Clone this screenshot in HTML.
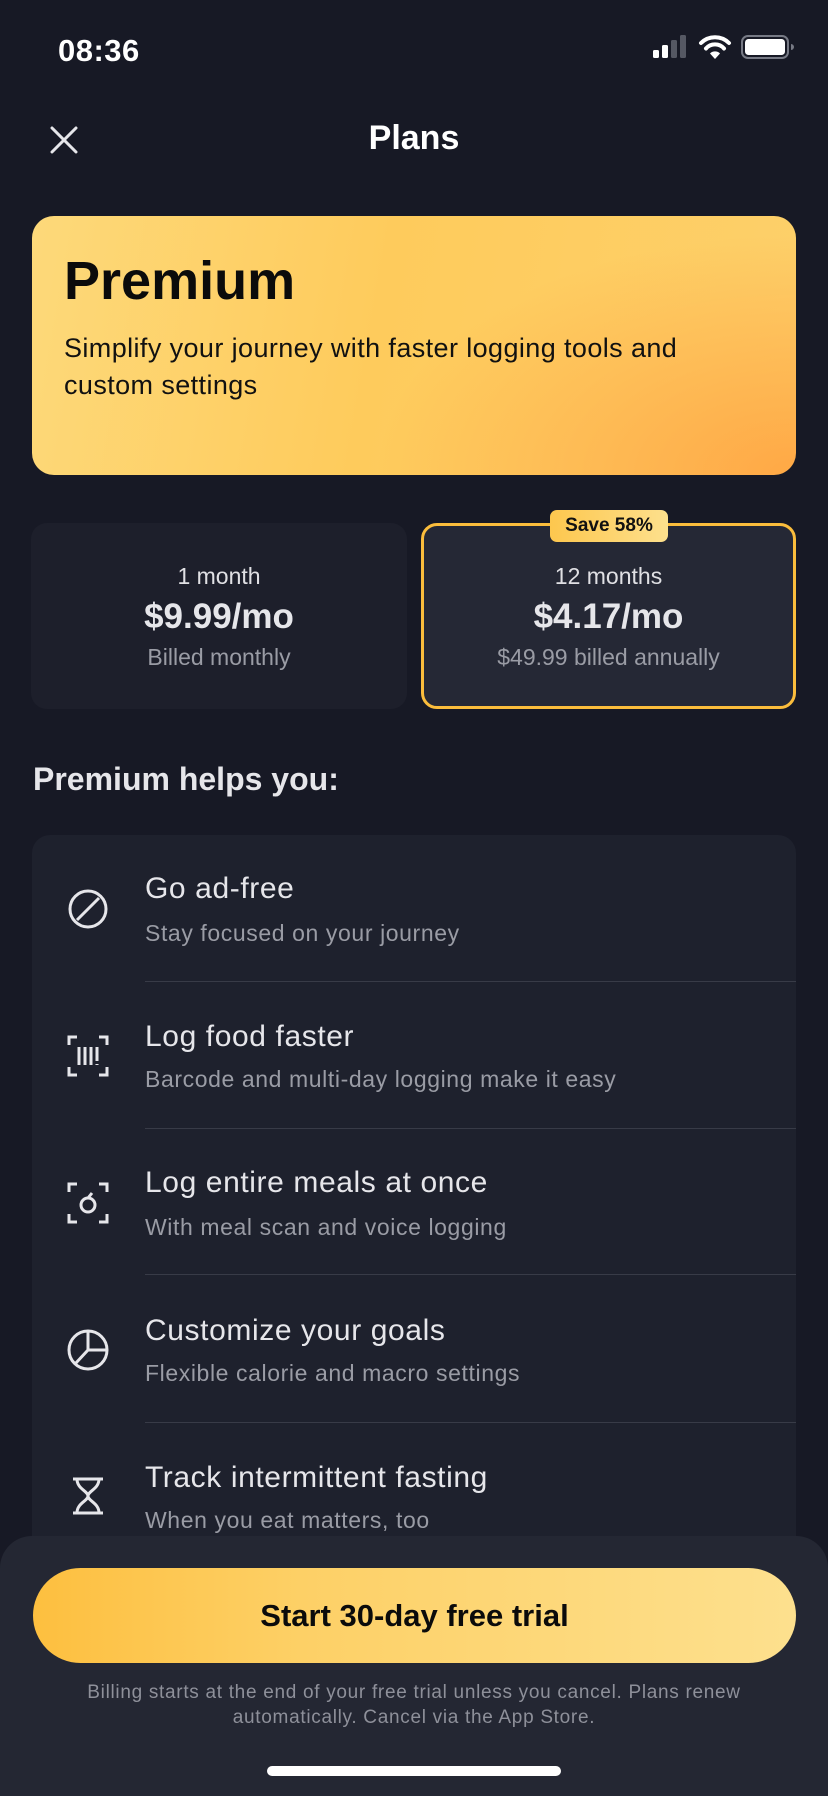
<!DOCTYPE html>
<html><head><meta charset="utf-8"><style>
*{margin:0;padding:0;box-sizing:border-box}
body{width:828px;height:1792px;background:#171925;font-family:"Liberation Sans",sans-serif;color:#fff;position:relative;overflow:hidden}
.abs{position:absolute}
.c{text-align:center}
.t{position:absolute;left:145px;font-size:30px;letter-spacing:0.6px;line-height:34px;color:#e6e6ea}
.s{position:absolute;left:145px;font-size:23px;letter-spacing:0.6px;line-height:26px;color:#9a9ca5}
.d{position:absolute;left:145px;width:651px;height:1px;background:#383b47}
</style></head><body>
<div class="abs" style="left:58px;top:33px;font-size:31px;font-weight:bold;letter-spacing:0.5px">08:36</div>
<svg class="abs" style="left:650px;top:34px" width="150" height="32" viewBox="0 0 150 32">
<rect x="3" y="16" width="6" height="8" rx="1.5" fill="#fff"/>
<rect x="12" y="11" width="6" height="13" rx="1.5" fill="#fff"/>
<rect x="21" y="6" width="6" height="18" rx="1.5" fill="#555863"/>
<rect x="30" y="1" width="6" height="23" rx="1.5" fill="#555863"/>
<path d="M51 9 a20 20 0 0 1 28 0" stroke="#fff" stroke-width="4" fill="none" stroke-linecap="round"/>
<path d="M56 14.5 a12 12 0 0 1 18 0" stroke="#fff" stroke-width="4" fill="none" stroke-linecap="round"/>
<path d="M60 19.5 L65 25 L70 19.5 a7 7 0 0 0 -10 0z" fill="#fff"/>
<rect x="92" y="2" width="46" height="22" rx="6" fill="none" stroke="#777a85" stroke-width="2"/>
<rect x="95" y="5" width="40" height="16" rx="3.5" fill="#fff"/>
<path d="M141 10 v6 a3 3 0 0 0 0-6z" fill="#777a85"/>
</svg>
<svg class="abs" style="left:50px;top:126px" width="28" height="28" viewBox="0 0 28 28"><path d="M2 2L26 26M26 2L2 26" stroke="#e6e6ea" stroke-width="3" stroke-linecap="round"/></svg>
<div class="abs c" style="left:0;width:828px;top:119px;font-size:34px;font-weight:bold">Plans</div>

<div class="abs" style="left:32px;top:216px;width:764px;height:259px;border-radius:22px;background:radial-gradient(ellipse 420px 240px at 100% 100%,#ffa845 0%,rgba(255,190,80,0) 100%),linear-gradient(100deg,#fdd97a 0%,#fecb5c 45%,#fdd06a 100%)"></div>
<div class="abs" style="left:64px;top:250px;font-size:54px;font-weight:bold;color:#0b0b0b">Premium</div>
<div class="abs" style="left:64px;top:330px;width:700px;font-size:27px;letter-spacing:0.4px;line-height:37px;color:#111">Simplify your journey with faster logging tools and<br>custom settings</div>

<div class="abs" style="left:31px;top:523px;width:376px;height:186px;border-radius:16px;background:#1d1f2b"></div>
<div class="abs c" style="left:31px;width:376px;top:563px;font-size:23px;color:#e0e0e4">1 month</div>
<div class="abs c" style="left:31px;width:376px;top:597px;font-size:35px;font-weight:bold;color:#e6e6ea">$9.99/mo</div>
<div class="abs c" style="left:31px;width:376px;top:644px;font-size:23px;color:#9a9ca5">Billed monthly</div>

<div class="abs" style="left:421px;top:523px;width:375px;height:186px;border-radius:16px;background:#252835;border:3px solid #fbbd3c"></div>
<div class="abs c" style="left:550px;top:510px;width:118px;height:32px;border-radius:7px;background:linear-gradient(90deg,#fdc74e,#fde08d);color:#111;font-size:19px;font-weight:bold;line-height:32px">Save 58%</div>
<div class="abs c" style="left:421px;width:375px;top:563px;font-size:23px;color:#e0e0e4">12 months</div>
<div class="abs c" style="left:421px;width:375px;top:597px;font-size:35px;font-weight:bold;color:#e6e6ea">$4.17/mo</div>
<div class="abs c" style="left:421px;width:375px;top:644px;font-size:23px;color:#9a9ca5">$49.99 billed annually</div>

<div class="abs" style="left:33px;top:761px;font-size:32px;font-weight:bold;color:#e6e6ea">Premium helps you:</div>

<div class="abs" style="left:32px;top:835px;width:764px;height:760px;border-radius:18px;background:#1e212d"></div>
<div class="d" style="top:981px"></div>
<div class="d" style="top:1128px"></div>
<div class="d" style="top:1274px"></div>
<div class="d" style="top:1422px"></div>

<div class="t" style="top:872px">Go ad-free</div>
<div class="s" style="top:920px">Stay focused on your journey</div>
<div class="t" style="top:1020px">Log food faster</div>
<div class="s" style="top:1066px">Barcode and multi-day logging make it easy</div>
<div class="t" style="top:1166px">Log entire meals at once</div>
<div class="s" style="top:1214px">With meal scan and voice logging</div>
<div class="t" style="top:1314px">Customize your goals</div>
<div class="s" style="top:1360px">Flexible calorie and macro settings</div>
<div class="t" style="top:1461px">Track intermittent fasting</div>
<div class="s" style="top:1507px">When you eat matters, too</div>

<svg class="abs" style="left:66px;top:887px" width="44" height="44" viewBox="0 0 44 44" fill="none" stroke="#e6e6ea" stroke-width="3"><circle cx="22" cy="22" r="18"/><path d="M11 33L33 11"/></svg>
<svg class="abs" style="left:66px;top:1034px" width="44" height="44" viewBox="0 0 44 44" fill="none" stroke="#e6e6ea" stroke-width="3"><path d="M3 11V3h8M33 3h8v8M41 33v8h-8M11 41H3v-8M13 13v18M19 13v18M25 13v18M31 13v14M31 30v1"/></svg>
<svg class="abs" style="left:66px;top:1181px" width="44" height="44" viewBox="0 0 44 44" fill="none" stroke="#e6e6ea" stroke-width="3"><path d="M3 11V3h8M33 3h8v8M41 33v8h-8M11 41H3v-8"/><circle cx="22" cy="24" r="7"/><path d="M22 17l4-5"/></svg>
<svg class="abs" style="left:66px;top:1328px" width="44" height="44" viewBox="0 0 44 44" fill="none" stroke="#e6e6ea" stroke-width="3"><circle cx="22" cy="22" r="19"/><path d="M22 3v19h19M22 22L9 36"/></svg>
<svg class="abs" style="left:70px;top:1476px" width="36" height="40" viewBox="0 0 36 40" fill="none" stroke="#e6e6ea" stroke-width="3"><path d="M3 3h30M3 37h30M7 3c0 10 11 12 11 17S7 27 7 37h22c0-10-11-12-11-17S29 13 29 3"/></svg>

<div class="abs" style="left:0;top:1536px;width:828px;height:260px;border-radius:32px 32px 0 0;background:#242733"></div>
<div class="abs c" style="left:33px;top:1568px;width:763px;height:95px;border-radius:48px;background:linear-gradient(90deg,#fdbf3f 0%,#fdd066 35%,#fde08e 100%);color:#0b0b0b;font-size:31px;font-weight:bold;line-height:95px">Start 30-day free trial</div>
<div class="abs c" style="left:40px;width:748px;top:1680px;font-size:19px;letter-spacing:0.7px;line-height:25px;color:#8e909a">Billing starts at the end of your free trial unless you cancel. Plans renew<br>automatically. Cancel via the App Store.</div>
<div class="abs" style="left:267px;top:1766px;width:294px;height:10px;border-radius:5px;background:#fff"></div>
</body></html>
